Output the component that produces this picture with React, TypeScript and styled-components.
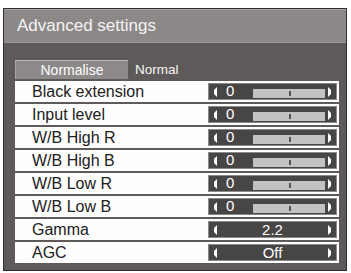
import React from "react";
import styled, { createGlobalStyle } from "styled-components";

const GlobalStyle = createGlobalStyle`
  body {
    margin: 0;
    background: #ffffff;
    font-family: "Liberation Sans", Arial, sans-serif;
  }
`;

const StyledPanel = styled.div`
  margin: 8px 0 0 3px;
  width: 344px;
  height: 263px;
  box-sizing: border-box;
  border: 1px solid #2e2c2c;
  background-color: #5e5a5a;
  display: flex;
  flex-direction: column;
`;

const StyledTitleBar = styled.div`
  height: 34px;
  box-sizing: border-box;
  background-color: #8c8888;
  border-top: 1px solid #aba7a7;
  border-bottom: 1px solid #9a9696;
  display: flex;
  align-items: center;
  padding-left: 13px;
  color: #f4f4f4;
  font-size: 17px;
`;

const StyledBody = styled.div`
  padding: 17px 7px 0 11px;
`;

const StyledModeRow = styled.div`
  display: flex;
  align-items: center;
  gap: 7px;
  height: 19px;
  margin-bottom: 2px;
`;

const StyledModeButton = styled.div`
  width: 113px;
  height: 19px;
  box-sizing: border-box;
  background-color: #8d8989;
  border-top: 1px solid #bdb9b9;
  border-left: 1px solid #a9a5a5;
  color: #ffffff;
  font-size: 14px;
  line-height: 18px;
  text-align: center;
`;

const StyledModeValue = styled.span`
  color: #f6f6f6;
  font-size: 13.5px;
`;

const StyledList = styled.div`
  display: flex;
  flex-direction: column;
  gap: 2px;
`;

const StyledRow = styled.div`
  height: 21px;
  background-color: #fdfdfd;
  display: flex;
  align-items: center;
`;

const StyledLabel = styled.div`
  flex: 1;
  padding-left: 17px;
  font-size: 16px;
  color: #222020;
`;

const StyledSlider = styled.div`
  width: 129px;
  height: 17px;
  margin-right: 2px;
  box-sizing: border-box;
  background-color: #484545;
  border: 1px solid #8a8888;
  padding: 0 4px;
  display: flex;
  align-items: center;
  color: #ffffff;
`;

const StyledValue = styled.div<{ $centered?: boolean }>`
  font-size: 15px;
  line-height: 14px;
  align-self: flex-start;
  ${(p) =>
    p.$centered
      ? "flex: 1; text-align: center; margin-top: 1px;"
      : "width: 36px; box-sizing: border-box; padding-left: 9px;"}
`;

const StyledBar = styled.div`
  position: relative;
  flex: 1;
  align-self: flex-end;
  height: 9px;
  margin: 0 3px 1px 0;
  background-color: #c3c1c1;

  &::after {
    content: "";
    position: absolute;
    left: 50%;
    top: 2px;
    width: 2px;
    height: 5px;
    background-color: #555252;
  }
`;

const Arrow: React.FC<{ dir: "left" | "right" }> = ({ dir }) => (
  <svg width="4" height="10" viewBox="0 0 4 10" style={{ flexShrink: 0 }}>
    {dir === "left" ? (
      <path d="M4 0 L1 3 L1 7 L4 10 Z" fill="#ffffff" />
    ) : (
      <path d="M0 0 L3 3 L3 7 L0 10 Z" fill="#ffffff" />
    )}
  </svg>
);

type Setting = {
  label: string;
  value: string;
  bar: boolean;
};

const settings: Setting[] = [
  { label: "Black extension", value: "0", bar: true },
  { label: "Input level", value: "0", bar: true },
  { label: "W/B High R", value: "0", bar: true },
  { label: "W/B High B", value: "0", bar: true },
  { label: "W/B Low R", value: "0", bar: true },
  { label: "W/B Low B", value: "0", bar: true },
  { label: "Gamma", value: "2.2", bar: false },
  { label: "AGC", value: "Off", bar: false },
];

const App: React.FC = () => {
  return (
    <>
      <GlobalStyle />
      <StyledPanel>
        <StyledTitleBar>Advanced settings</StyledTitleBar>
        <StyledBody>
          <StyledModeRow>
            <StyledModeButton>Normalise</StyledModeButton>
            <StyledModeValue>Normal</StyledModeValue>
          </StyledModeRow>
          <StyledList>
            {settings.map((s) => (
              <StyledRow key={s.label}>
                <StyledLabel>{s.label}</StyledLabel>
                <StyledSlider>
                  <Arrow dir="left" />
                  <StyledValue $centered={!s.bar}>{s.value}</StyledValue>
                  {s.bar && <StyledBar />}
                  <Arrow dir="right" />
                </StyledSlider>
              </StyledRow>
            ))}
          </StyledList>
        </StyledBody>
      </StyledPanel>
    </>
  );
};

export default App;
